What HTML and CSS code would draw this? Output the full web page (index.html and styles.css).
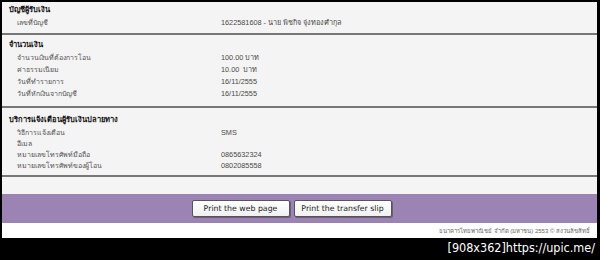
FILE: index.html
```html
<!DOCTYPE html>
<html>
<head>
    <title>ยืนยันการโอนเงิน</title>
    <link rel="stylesheet" href="styles.css">
</head>
<body>
    <div class="page">
        <div class="section first">
            <div class="section-title">บัญชีผู้รับเงิน</div>
            <div class="row"><span class="label">เลขที่บัญชี</span><span class="value">1622581608 - นาย พิชกิจ จุ่งทองคำกุล</span></div>
        </div>

        <div class="section">
            <div class="section-title">จำนวนเงิน</div>
            <div class="row"><span class="label">จำนวนเงินที่ต้องการโอน</span><span class="value">100.00 บาท</span></div>
            <div class="row"><span class="label">ค่าธรรมเนียม</span><span class="value">10.00 &nbsp;บาท</span></div>
            <div class="row"><span class="label">วันที่ทำรายการ</span><span class="value">16/11/2555</span></div>
            <div class="row"><span class="label">วันที่หักเงินจากบัญชี</span><span class="value">16/11/2555</span></div>
        </div>

        <div class="section notify">
            <div class="section-title">บริการแจ้งเตือนผู้รับเงินปลายทาง</div>
            <div class="row"><span class="label">วิธีการแจ้งเตือน</span><span class="value">SMS</span></div>
            <div class="row"><span class="label">อีเมล</span><span class="value"></span></div>
            <div class="row"><span class="label">หมายเลขโทรศัพท์มือถือ</span><span class="value">0865632324</span></div>
            <div class="row"><span class="label">หมายเลขโทรศัพท์ของผู้โอน</span><span class="value">0802085558</span></div>
        </div>

        <div class="spacer"></div>

        <div class="actions">
            <button class="print-btn">Print the web page</button>
            <button class="print-btn">Print the transfer slip</button>
        </div>

        <div class="footer">ธนาคารไทยพาณิชย์ จำกัด (มหาชน) 2553 © สงวนลิขสิทธิ์</div>
    </div>
    <div class="stamp">[908x362]https://upic.me/</div>
</body>
</html>
```

FILE: styles.css
```css
body { margin: 0; background: #000; font-family: Tahoma, "Liberation Sans", sans-serif; }
.page { margin: 2px 3px 0 2px; background: #f4f4f4; }
.section { padding: 4px 0 6px; border-bottom: 2px solid #777; }
.section.first { padding: 2px 0 4px; }
.section.notify { padding: 6px 0 4px; }
.section-title { font-size: 7.5px; font-weight: bold; color: #111; line-height: 12px; padding-left: 7px; margin-bottom: 1px; }
.row { display: flex; line-height: 12px; font-size: 7px; }
.notify .row { line-height: 11px; }
.label { width: 204px; padding-left: 15px; color: #555; }
.value { color: #4a4a4a; font-size: 7.3px; }
.spacer { height: 17px; }
.actions { background: #9b84b4; height: 29px; display: flex; justify-content: center; align-items: center; gap: 4px; padding-right: 16px; }
.print-btn { width: 98px; height: 17px; padding: 0; background: linear-gradient(#fff, #f0f0f0); border: 1px solid #555; border-radius: 2px; box-shadow: 1px 1px 0 #6d5b80; font-family: "DejaVu Sans", sans-serif; font-size: 7.8px; color: #222; }
.footer { background: #fff; height: 15px; line-height: 16px; text-align: right; padding-right: 7px; font-size: 6px; color: #666; }
.stamp { text-align: right; color: #fff; font-family: "DejaVu Sans", sans-serif; font-stretch: condensed; font-size: 12.5px; line-height: 20px; padding-right: 5px; }
```
